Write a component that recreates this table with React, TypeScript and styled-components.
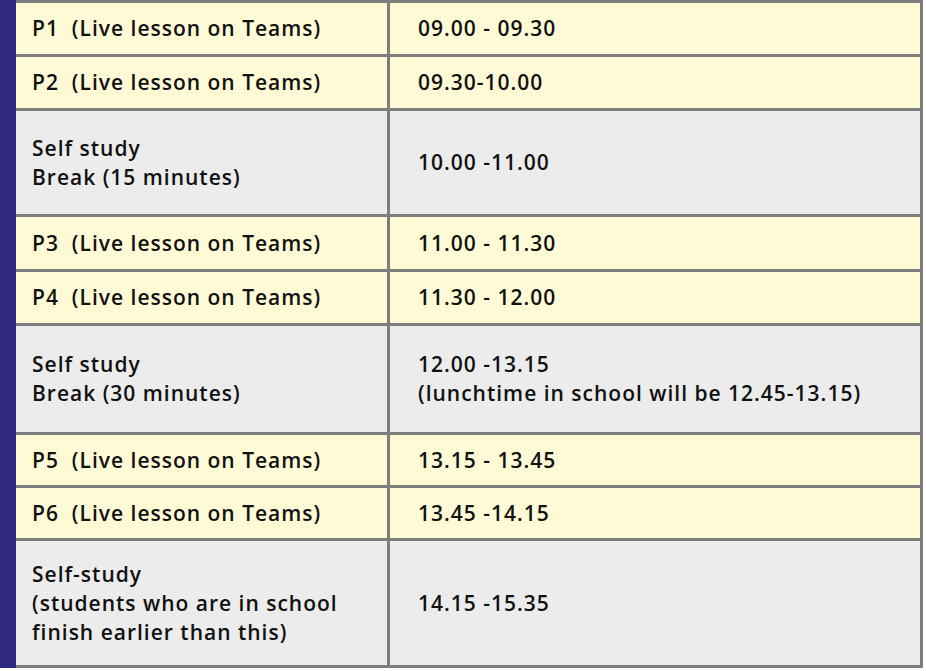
import * as React from 'react'
import styled, { createGlobalStyle } from 'styled-components'

const GlobalStyle = createGlobalStyle`
  html, body {
    margin: 0;
    padding: 0;
    background: white;
  }
`

const Page = styled.div`
  display: flex;
  align-items: stretch;
  width: 926px;
`

const SideBar = styled.div`
  width: 16px;
  flex-shrink: 0;
  background-color: #2f2a7f;
`

const Timetable = styled.div`
  display: grid;
  grid-template-columns: 371px 530px;
  grid-template-rows: 51px 51px 103px 52px 51px 106px 50px 50px 124px;
  gap: 3px;
  padding: 3px 3px 3px 0;
  background-color: #7d7d7d;
`

const Cell = styled.div<{ $kind: 'lesson' | 'study'; $time?: boolean }>`
  display: flex;
  flex-direction: column;
  justify-content: center;
  padding-left: ${(p) => (p.$time ? '28px' : '16px')};
  background-color: ${(p) => (p.$kind === 'lesson' ? '#fffad6' : '#ececec')};
  color: #111;
  font-family: 'Open Sans', Lato, sans-serif;
  font-size: 21px;
  font-weight: 600;
  letter-spacing: 1px;
  line-height: 29px;
  font-variant-ligatures: none;
  white-space: pre;
`

type Row = {
  kind: 'lesson' | 'study'
  activity: string[]
  time: string[]
}

const rows: Row[] = [
  { kind: 'lesson', activity: ['P1  (Live lesson on Teams)'], time: ['09.00 - 09.30'] },
  { kind: 'lesson', activity: ['P2  (Live lesson on Teams)'], time: ['09.30-10.00'] },
  { kind: 'study', activity: ['Self study', 'Break (15 minutes)'], time: ['10.00 -11.00'] },
  { kind: 'lesson', activity: ['P3  (Live lesson on Teams)'], time: ['11.00 - 11.30'] },
  { kind: 'lesson', activity: ['P4  (Live lesson on Teams)'], time: ['11.30 - 12.00'] },
  {
    kind: 'study',
    activity: ['Self study', 'Break (30 minutes)'],
    time: ['12.00 -13.15', '(lunchtime in school will be 12.45-13.15)'],
  },
  { kind: 'lesson', activity: ['P5  (Live lesson on Teams)'], time: ['13.15 - 13.45'] },
  { kind: 'lesson', activity: ['P6  (Live lesson on Teams)'], time: ['13.45 -14.15'] },
  {
    kind: 'study',
    activity: ['Self-study', '(students who are in school', 'finish earlier than this)'],
    time: ['14.15 -15.35'],
  },
]

export default function App() {
  return (
    <React.Fragment>
      <GlobalStyle />
      <Page>
        <SideBar />
        <Timetable>
          {rows.map((row, i) => (
            <React.Fragment key={i}>
              <Cell $kind={row.kind}>
                {row.activity.map((line) => (
                  <div key={line}>{line}</div>
                ))}
              </Cell>
              <Cell $kind={row.kind} $time>
                {row.time.map((line) => (
                  <div key={line}>{line}</div>
                ))}
              </Cell>
            </React.Fragment>
          ))}
        </Timetable>
      </Page>
    </React.Fragment>
  )
}
